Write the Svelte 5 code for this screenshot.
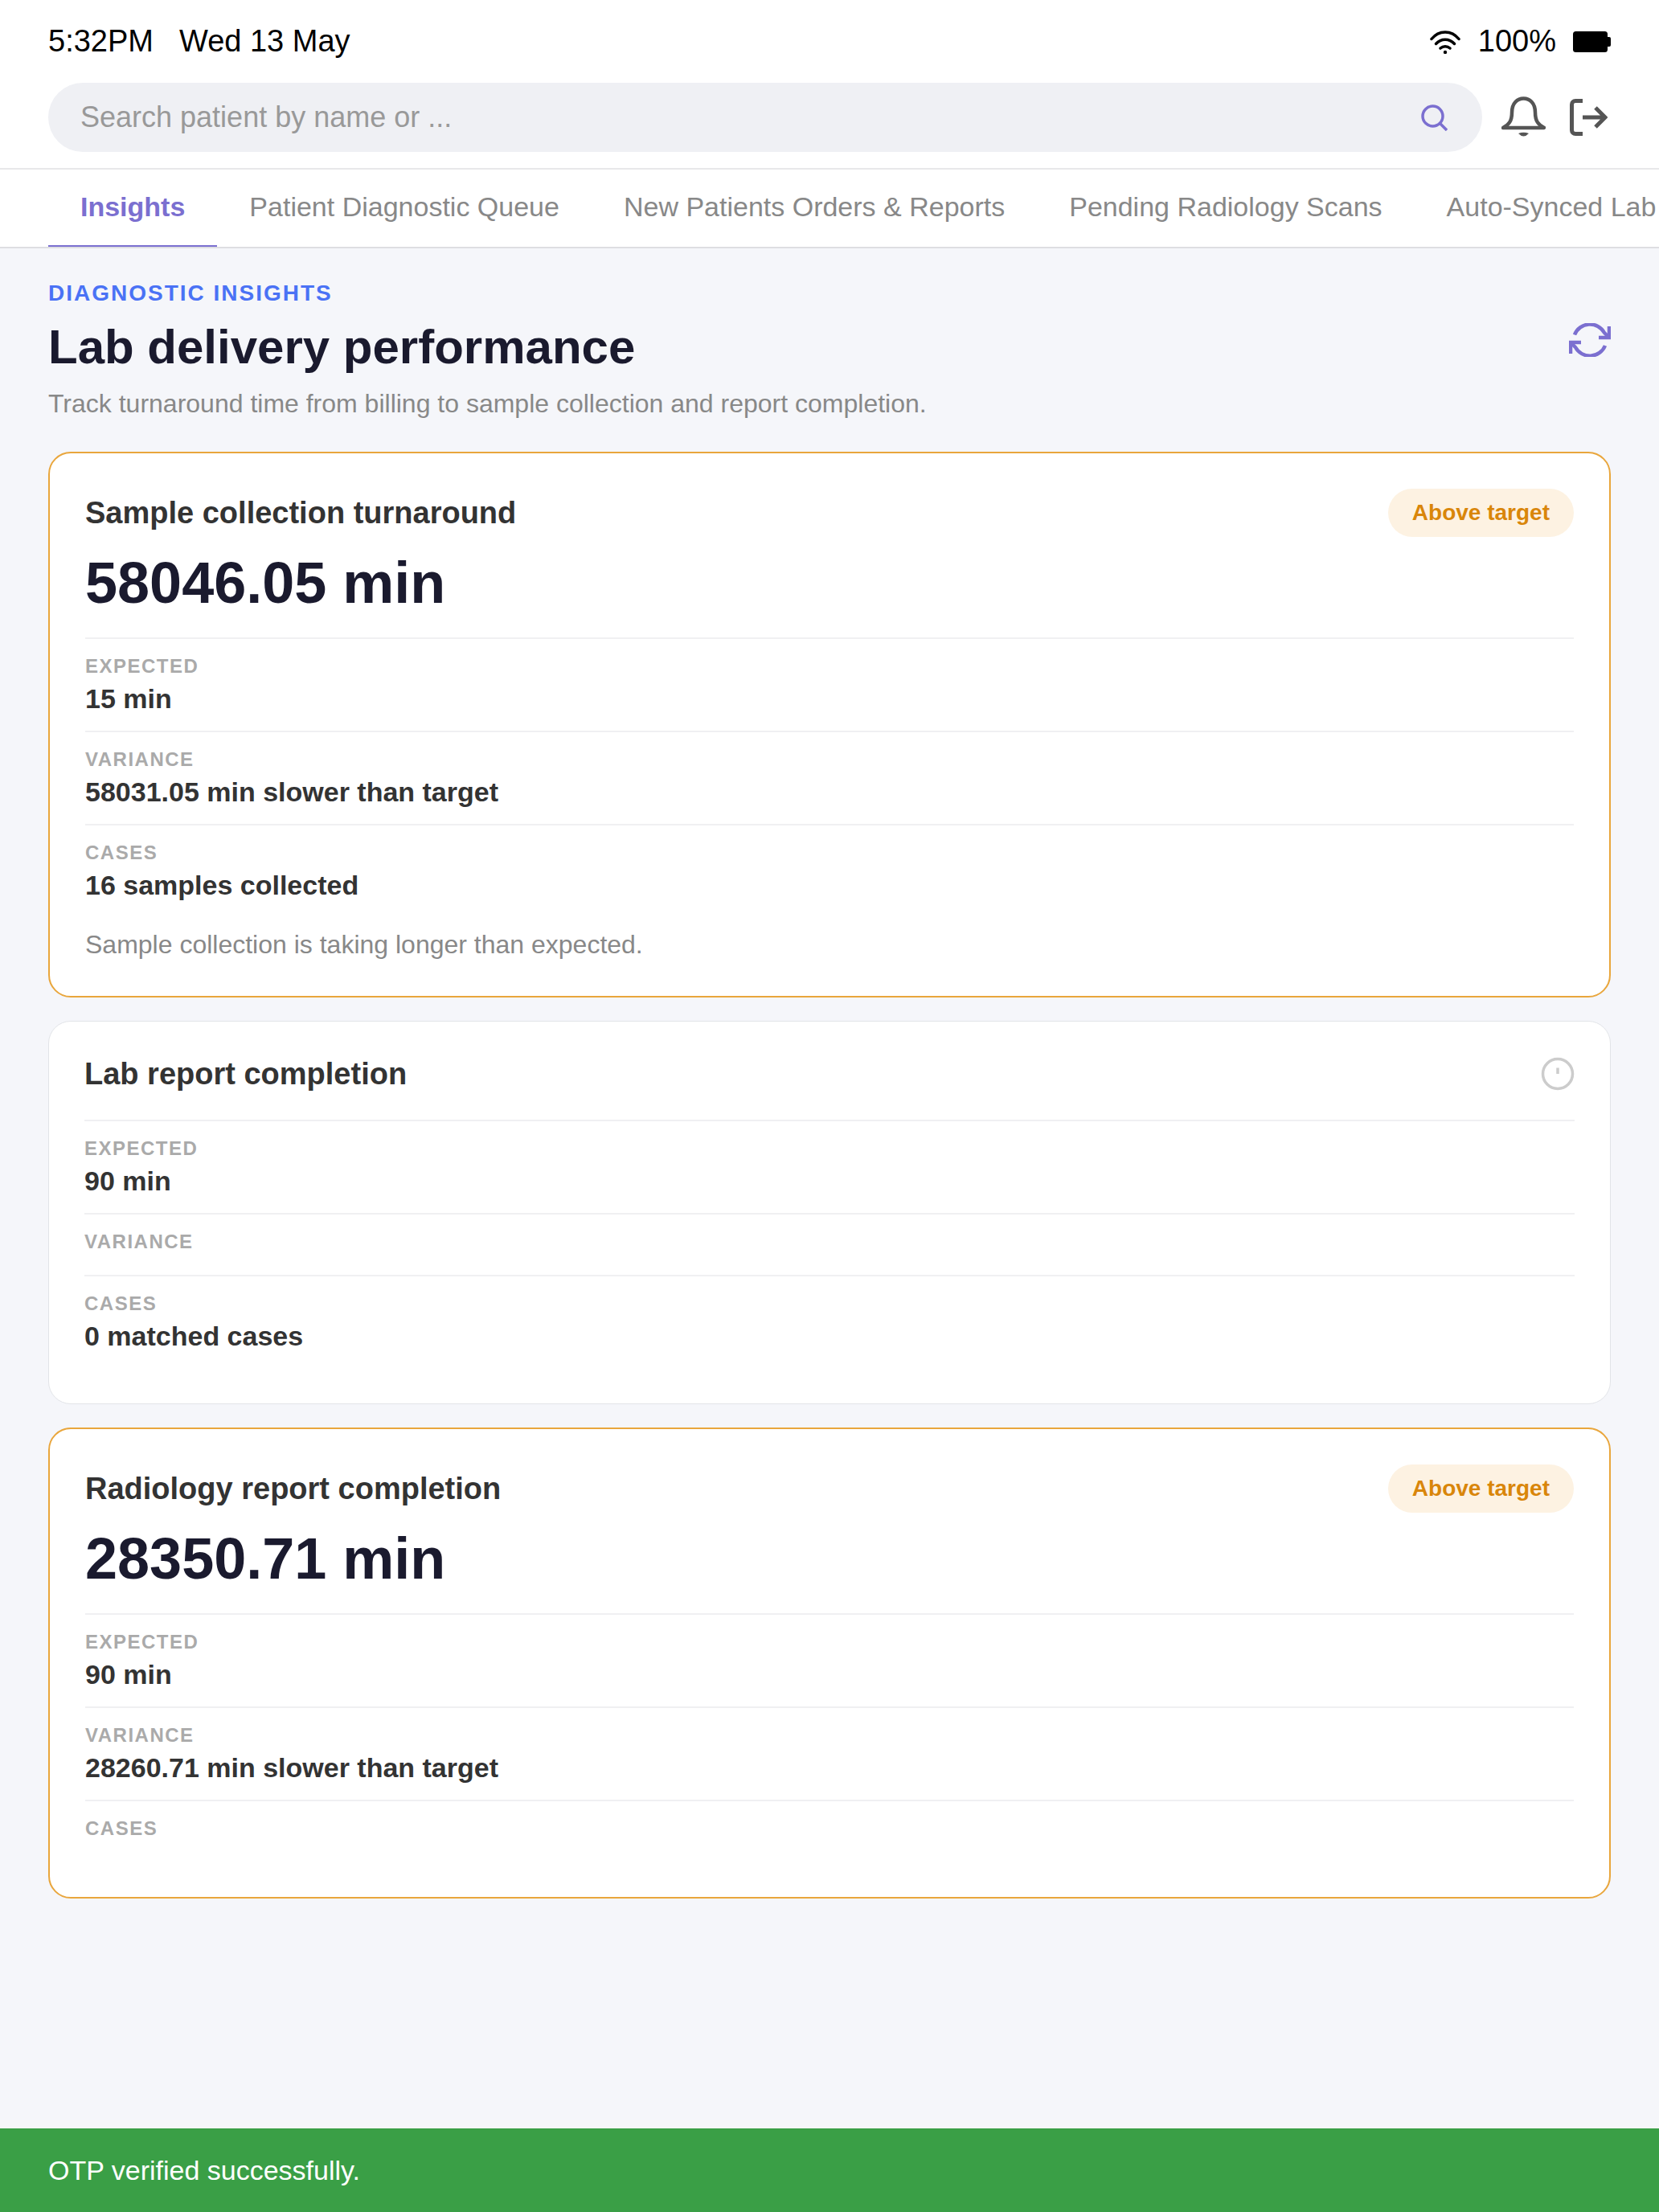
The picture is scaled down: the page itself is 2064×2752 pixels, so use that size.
<script>
  const tabs = ['Insights', 'Patient Diagnostic Queue', 'New Patients Orders & Reports', 'Pending Radiology Scans', 'Auto-Synced Lab Reports'];
  const cards = [
    {
      title: 'Sample collection turnaround', value: '58046.05 min', alert: true,
      rows: [['EXPECTED', '15 min'], ['VARIANCE', '58031.05 min slower than target'], ['CASES', '16 samples collected']],
      note: 'Sample collection is taking longer than expected.'
    },
    {
      title: 'Lab report completion', value: '', alert: false,
      rows: [['EXPECTED', '90 min'], ['VARIANCE', ''], ['CASES', '0 matched cases']],
      note: ''
    },
    {
      title: 'Radiology report completion', value: '28350.71 min', alert: true,
      rows: [['EXPECTED', '90 min'], ['VARIANCE', '28260.71 min slower than target'], ['CASES', '']],
      note: ''
    }
  ];
</script>

<div class="page">
  <header class="top">
    <div class="status">
      <div class="clock"><span>5:32PM</span><span>Wed 13 May</span></div>
      <div class="sys">
        <svg class="wifi" viewBox="0 0 38 30" fill="none" stroke="#000" stroke-width="3.500" stroke-linecap="round">
          <path d="M2 11.500C11 0 27 0 36 11.500" />
          <path d="M7.500 17.500C14 10.500 24 10.500 30.500 17.500" />
          <path d="M13 23C16.500 20 21.500 20 25 23" />
          <circle cx="19" cy="28" r="2.200" fill="#000" stroke="none" />
        </svg>
        <span>100%</span>
        <svg class="battery" viewBox="0 0 47 26"><rect width="43" height="26" rx="3.500" fill="#000" /><path d="M43 7h2a2 2 0 0 1 2 2v8a2 2 0 0 1-2 2h-2z" fill="#000" /></svg>
      </div>
    </div>
    <div class="searchrow">
      <div class="search">
        <span class="ph">Search patient by name or ...</span>
        <svg class="searchicon" viewBox="0 0 33 33" fill="none" stroke="#7b6fd0" stroke-width="3.500"><circle cx="14.500" cy="14.500" r="12.500" /><path d="M23.500 23.500L32 32" /></svg>
      </div>
      <svg class="bell" viewBox="0 0 55 52" fill="none" stroke="#555" stroke-width="4.500" stroke-linejoin="round">
        <path d="M2 39C9 35 13 31 13 20C13 8 20 2.500 27.500 2.500C35 2.500 42 8 42 20C42 31 46 35 53 39Z" />
        <path d="M21 46Q27.500 43.500 34 46Q27.500 53 21 46Z" fill="#555" stroke="none" />
      </svg>
      <svg class="exit" viewBox="0 0 47 46" fill="none" stroke="#555" stroke-width="5">
        <path d="M16 2.500H7A4.500 4.500 0 0 0 2.500 7V39A4.500 4.500 0 0 0 7 43.500H16" />
        <path d="M16 23H44M32 11L44 23L32 35" />
      </svg>
    </div>
  </header>

  <nav class="tabs">
    {#each tabs as tab, i}
      <div class="tab" class:active={i === 0}>{tab}</div>
    {/each}
  </nav>

  <main class="content">
    <div class="eyebrow">DIAGNOSTIC INSIGHTS</div>
    <div class="titlerow">
      <h1>Lab delivery performance</h1>
      <svg class="refresh" viewBox="0 0 52 42" fill="none" stroke="#7b6fd0" stroke-width="4.500">
        <path d="M7 14.500A20.500 20.500 0 0 1 44 12L50 18" />
        <path d="M50 4V18H37" />
        <path d="M45 28A20.500 20.500 0 0 1 8 30L2 24" />
        <path d="M2 38V24H15" />
      </svg>
    </div>
    <p class="sub">Track turnaround time from billing to sample collection and report completion.</p>

    {#each cards as card}
      <section class="card" class:warn={card.alert}>
        <div class="head">
          <h2>{card.title}</h2>
          {#if card.alert}
            <span class="badge">Above target</span>
          {:else}
            <svg class="info" viewBox="0 0 42 42" fill="none" stroke="#cccccc" stroke-width="3.500">
              <circle cx="21" cy="21" r="18.500" />
              <path d="M21 13.500V21" />
            </svg>
          {/if}
        </div>
        {#if card.value}<div class="big">{card.value}</div>{/if}
        {#each card.rows as row}
          <div class="row">
            <div class="label">{row[0]}</div>
            {#if row[1]}<div class="val">{row[1]}</div>{/if}
          </div>
        {/each}
        {#if card.note}<p class="note">{card.note}</p>{/if}
      </section>
    {/each}
  </main>

  <footer class="toast">OTP verified successfully.</footer>
</div>

<style>
  :global(body) { margin: 0; }
  * { box-sizing: border-box; }
  .page {
    width: 2064px;
    height: 2752px;
    overflow: hidden;
    display: flex;
    flex-direction: column;
    background: #f5f6fa;
    font-family: "Liberation Sans", Arial, sans-serif;
  }
  .top { background: #fff; height: 209px; padding: 0 60px; }
  .status { display: flex; justify-content: space-between; align-items: center; height: 103px; font-size: 38px; color: #000; }
  .clock { display: flex; gap: 32px; }
  .sys { display: flex; align-items: center; }
  .wifi { width: 38px; height: 30px; margin-right: 22px; }
  .battery { width: 47px; height: 26px; margin-left: 21px; }
  .searchrow { display: flex; align-items: center; }
  .search {
    flex: 1;
    height: 86px;
    border-radius: 43px;
    background: #eff0f4;
    display: flex;
    align-items: center;
    justify-content: space-between;
    padding: 0 43px 0 40px;
    font-size: 36px;
    color: #999;
  }
  .searchicon { width: 33px; height: 33px; }
  .bell { width: 55px; height: 52px; margin-left: 24px; }
  .exit { width: 47px; height: 46px; margin-left: 30px; margin-right: 4px; }
  .tabs {
    display: flex;
    height: 100px;
    background: #fff;
    border-top: 2px solid #e8e8ea;
    border-bottom: 2px solid #dedee2;
    padding-left: 60px;
    white-space: nowrap;
    overflow: hidden;
  }
  .tab { padding: 0 40px; height: 98px; line-height: 92px; font-size: 34px; color: #888; flex: none; }
  .tab.active { color: #7b6fd0; font-weight: 700; border-bottom: 4px solid #7b6fd0; }
  .content { flex: 1; padding: 0 60px; }
  .eyebrow { margin-top: 39px; font-size: 28px; line-height: 34px; font-weight: 700; letter-spacing: 2px; color: #4a72f5; }
  .titlerow { display: flex; justify-content: space-between; align-items: flex-start; margin-top: 13px; }
  h1 { margin: 0; font-size: 60px; line-height: 74px; font-weight: 700; color: #1a1a2e; }
  .refresh { width: 52px; height: 42px; margin-top: 7px; }
  .sub { margin: 14px 0 0; font-size: 32px; line-height: 39px; color: #888; }
  .card {
    background: #fff;
    border: 1px solid #e2e4e8;
    border-radius: 28px;
    padding: 42px 44px 44px;
    margin-top: 29px;
  }
  .sub + .card { margin-top: 40px; }
  .card.warn { border: 2px solid #e9a63c; padding: 44px 44px 44px; }
  .head { display: flex; justify-content: space-between; align-items: center; min-height: 42px; }
  h2 { margin: 0; font-size: 38px; line-height: 46px; font-weight: 700; color: #333; }
  .badge {
    height: 60px;
    line-height: 60px;
    padding: 0 30px;
    border-radius: 30px;
    background: #fdf2e2;
    color: #d9860a;
    font-size: 28px;
    font-weight: 700;
  }
  .info { width: 42px; height: 42px; }
  .big { margin-top: 11px; margin-bottom: 22px; font-size: 72px; line-height: 92px; font-weight: 700; color: #1a1a2e; }
  .head + .row { margin-top: 34px; }
  .row { min-height: 77px; border-top: 2px solid #f0f0f2; padding: 19px 0 18px; }
  .label { font-size: 24px; line-height: 30px; font-weight: 700; letter-spacing: 1.500px; color: #aaa; }
  .val { margin-top: 5px; font-size: 34px; line-height: 41px; font-weight: 700; color: #333; }
  .row:has(.val) { padding-bottom: 19px; }
  .note { margin: 15px 0 0; font-size: 32px; line-height: 39px; color: #888; }
  .toast { height: 104px; line-height: 104px; background: #3a9f46; color: #fff; font-size: 34px; padding: 0 60px; flex: none; }
</style>
